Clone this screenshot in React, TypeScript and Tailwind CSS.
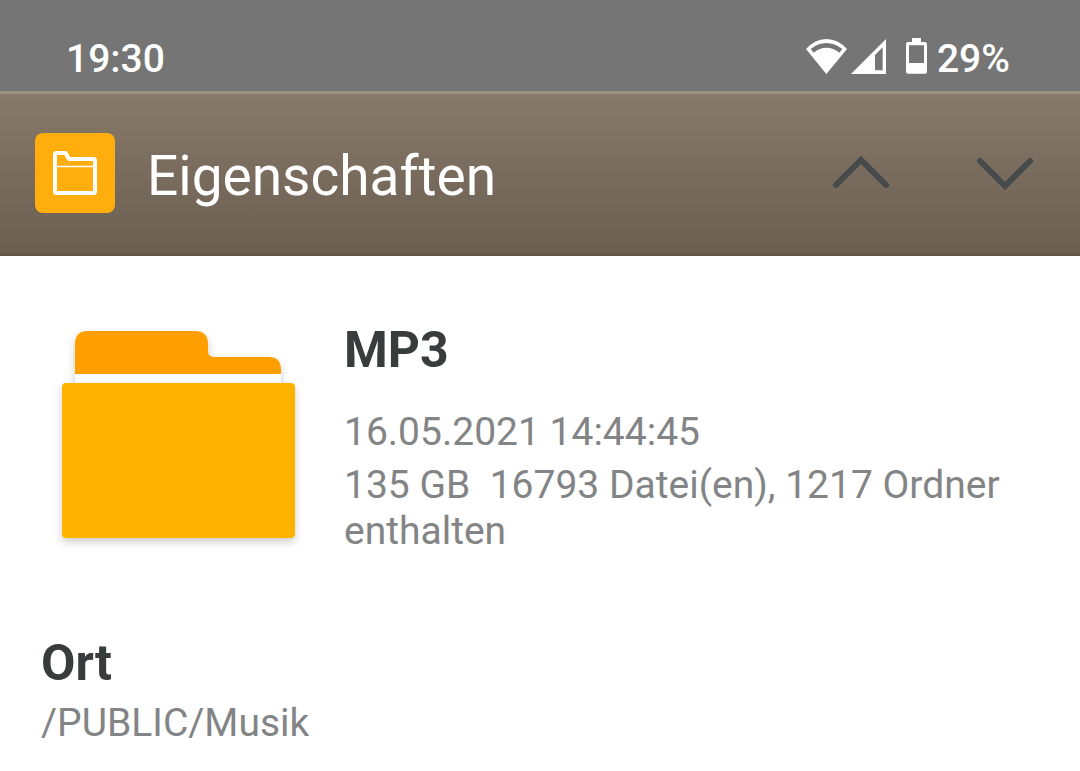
import type { ReactNode } from 'react';

const WifiIcon = () => (
  <svg viewBox="81 54 123 108" className="h-9 w-[41px]" fill="currentColor" aria-hidden="true">
    <path
      fillRule="evenodd"
      d="M142 162L81 87Q108 57 142 57Q177 57 204 87ZM95 87L104 98Q122 83 142 83Q163 83 181 98L190 87Q168 69 142 69Q117 69 95 87Z"
    />
  </svg>
);

const SignalIcon = () => (
  <svg viewBox="213 54 105 108" className="h-9 w-[35px]" fill="currentColor" aria-hidden="true">
    <path fillRule="evenodd" d="M318 57V162H213ZM308 82L285 105V151H308Z" />
  </svg>
);

const BatteryIcon = () => (
  <svg viewBox="378 54 63 108" className="h-9 w-[21px]" fill="currentColor" aria-hidden="true">
    <path
      fillRule="evenodd"
      d="M396 54H423V66H435Q441 66 441 72V155Q441 161 435 161H384Q378 161 378 155V72Q378 66 384 66H396ZM387 76V129H432V76Z"
    />
  </svg>
);

const FolderBadge = () => (
  <div className="flex size-20 shrink-0 items-center justify-center rounded-lg bg-[#ffae0d]">
    <svg viewBox="0 0 44 44" className="size-11" fill="none" stroke="white" aria-hidden="true">
      <path
        strokeWidth="4"
        strokeLinejoin="round"
        d="M2 3.5Q2 2 3.5 2H12.5L16 8H40.5Q42 8 42 9.5V40.5Q42 42 40.5 42H3.5Q2 42 2 40.5Z"
      />
      <path strokeWidth="1.5" d="M3 15.5H41" />
    </svg>
  </div>
);

const FolderIcon = () => (
  <svg viewBox="0 0 257 232" className="h-[232px] w-[257px] shrink-0" aria-hidden="true">
    <defs>
      <filter id="shadow" x="-10%" y="-10%" width="120%" height="125%">
        <feDropShadow dx="0" dy="4" stdDeviation="4" floodOpacity="0.2" />
      </filter>
    </defs>
    <g filter="url(#shadow)">
      <path fill="#fff" d="M25 24Q25 11 38 11H145Q158 11 158 24V31Q158 37 165 37H219Q231 37 231 50V72H25Z" />
      <path fill="#ffa000" d="M25 24Q25 11 38 11H145Q158 11 158 24V31Q158 37 165 37H219Q231 37 231 50V54H25Z" />
    </g>
    <rect x="12" y="63" width="233" height="155" rx="4" fill="#ffb300" filter="url(#shadow)" />
  </svg>
);

const NavButton = ({ label, children }: { label: string; children: ReactNode }) => (
  <button type="button" aria-label={label} className="flex h-full w-36 items-center justify-center">
    <svg
      viewBox="0 0 60 36"
      className="h-9 w-[60px]"
      fill="none"
      stroke="#474a4b"
      strokeWidth="6"
      strokeLinecap="round"
    >
      {children}
    </svg>
  </button>
);

const App = () => {
  return (
    <div className="min-h-screen bg-white font-[Roboto,sans-serif] text-[39px] leading-[46px] text-[#838485]">
      {/* Status bar */}
      <div className="flex items-start justify-between bg-[#757575] pt-9 pr-[70px] pb-[9px] pl-[66px] font-medium text-white">
        <span>19:30</span>
        <div className="flex">
          <div className="flex items-start pt-0.5">
            <WifiIcon />
            <div className="ml-1">
              <SignalIcon />
            </div>
            <div className="ml-5">
              <BatteryIcon />
            </div>
          </div>
          <span className="ml-2.5">29%</span>
        </div>
      </div>

      {/* Title bar */}
      <header className="flex h-[165px] items-center border-t-3 border-b-3 border-t-[#9d9180] border-b-[#62554a] bg-linear-to-b from-[#87796a] to-[#6b5f51] pr-[3px] pb-0.5 pl-[35px]">
        <FolderBadge />
        <h1 className="ml-8 flex-1 pt-1.5 text-[55px] leading-[64px] text-white">Eigenschaften</h1>
        <NavButton label="Vorheriges">
          <path d="M5 30L30 5L55 30" />
        </NavButton>
        <NavButton label="Nächstes">
          <path d="M5 6L30 31L55 6" />
        </NavButton>
      </header>

      <main className="pt-16">
        <section className="flex items-start pr-10 pl-[50px]">
          <FolderIcon />
          <div className="ml-[37px] min-w-0">
            <h2 className="text-[50px] leading-[60px] font-bold text-[#393c3d]">MP3</h2>
            <p className="mt-[29px]">16.05.2021 14:44:45</p>
            <p className="mt-[7px]">135 GB&nbsp; 16793 Datei(en), 1217 Ordner enthalten</p>
          </div>
        </section>

        <section className="mt-[79px] px-[41px]">
          <h2 className="text-[50px] leading-[60px] font-bold text-[#393c3d]">Ort</h2>
          <p className="mt-[7px]">/PUBLIC/Musik</p>
        </section>
      </main>
    </div>
  );
};

export default App;
